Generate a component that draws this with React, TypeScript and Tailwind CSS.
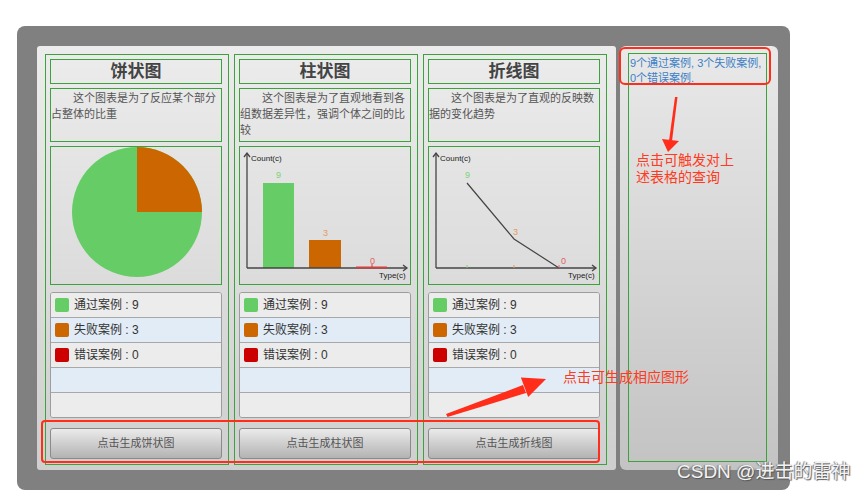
import React from 'react';

const FONT = '"Liberation Sans", "Noto Sans CJK SC", sans-serif';

const GREEN = '#66cc66';
const ORANGE = '#cc6600';
const RED = '#cc0000';

type Chart = {
  title: string;
  desc: string;
  button: string;
  kind: 'pie' | 'bar' | 'line';
};

const charts: Chart[] = [
  { title: '饼状图', desc: '这个图表是为了反应某个部分占整体的比重', button: '点击生成饼状图', kind: 'pie' },
  { title: '柱状图', desc: '这个图表是为了直观地看到各组数据差异性，强调个体之间的比较', button: '点击生成柱状图', kind: 'bar' },
  { title: '折线图', desc: '这个图表是为了直观的反映数据的变化趋势', button: '点击生成折线图', kind: 'line' },
];

const legend = [
  { label: '通过案例 : 9', color: GREEN },
  { label: '失败案例 : 3', color: ORANGE },
  { label: '错误案例 : 0', color: RED },
];

export default function App() {
  return (
    <div className="relative w-[864px] h-[493px] bg-white overflow-hidden" style={{ fontFamily: FONT }}>
      <div className="pl-[17px] pt-[26px]">
        {/* dark frame */}
        <div className="w-[773px] h-[464px] rounded-lg bg-[#808080] pl-5 pt-5 pr-3 flex gap-1">
          {/* charts panel */}
          <div className="w-[579px] h-[424px] rounded-[3px] bg-gradient-to-b from-[#ececec] to-[#cfcfcf] pl-2 pt-2 flex gap-[5px]">
            {charts.map((c) => (
              <ChartColumn key={c.title} chart={c} />
            ))}
          </div>

          {/* result panel */}
          <div className="w-[158px] h-[424px] rounded-md bg-gradient-to-b from-[#e9e9e9] to-[#c3c3c3] pl-2 pt-[7px]">
            <div className="w-[139px] h-[409px] border border-[#3ca33c] pl-px pt-[2px]">
              <p className="text-[11px] leading-[15px] text-[#3b7fc6]">
                9个通过案例, 3个失败案例, 0个错误案例.
              </p>
            </div>
          </div>
        </div>
      </div>

      {/* annotations */}
      <div className="absolute left-[41px] top-[420px] w-[559px] h-[43px] border-2 border-[#ff2d1a] rounded-[4px]" />
      <div className="absolute left-[619px] top-[47px] w-[152px] h-[38px] border-2 border-[#ff2d1a] rounded-md" />

      <svg className="absolute inset-0 pointer-events-none" width={864} height={493}>
        <polygon points="675,97 677.5,97 672,141 669,141" fill="#ff2d1a" />
        <polygon points="662,139 679,141 668,152" fill="#ff2d1a" />
        <polygon points="446,414 447.5,417 526,393 523,385" fill="#ff2d1a" />
        <polygon points="520.9,377.5 528.2,397 546,379" fill="#ff2d1a" />
      </svg>

      <div className="absolute left-[636px] top-[152px] text-[14px] leading-[17px] text-[#ff3a20]">
        <div>点击可触发对上</div>
        <div>述表格的查询</div>
      </div>
      <div className="absolute left-[563px] top-[369px] text-[14px] leading-[17px] text-[#ff3a20]">
        点击可生成相应图形
      </div>

      <div
        className="absolute left-[677px] top-[461px] text-[19px] leading-[22px] text-[#f2f2f2]"
        style={{ textShadow: '1px 1px 1px #555, -1px 0 1px #777' }}
      >
        CSDN @进击的雷神
      </div>
    </div>
  );
}

function ChartColumn({ chart }: { chart: Chart }) {
  return (
    <div className="w-[184px] h-[411px] border border-[#3ca33c] pl-1 pt-1 flex flex-col">
      <div className="w-[172px] h-[25px] border border-[#3ca33c] flex items-center justify-center text-[17px] font-bold text-[#444]">
        {chart.title}
      </div>
      <div className="w-[172px] h-[54px] mt-1 border border-[#3ca33c] text-[11px] leading-4 text-[#555] indent-[22px] pt-px">
        {chart.desc}
      </div>
      <div className="w-[172px] h-[139px] mt-1 border border-[#3ca33c]">
        {chart.kind === 'pie' && <PieChart />}
        {chart.kind === 'bar' && <BarChart />}
        {chart.kind === 'line' && <LineChart />}
      </div>

      {/* legend list */}
      <div className="w-[172px] h-[126px] mt-[7px] border border-[#9d9d9d] rounded-[3px] overflow-hidden flex flex-col">
        {[0, 1, 2, 3, 4].map((i) => {
          const item = legend[i];
          return (
            <div
              key={i}
              className={`h-[25px] shrink-0 flex items-center gap-[5px] pl-1 text-[12px] text-[#333] ${
                i % 2 === 1 ? 'bg-[#e1ecf6]' : 'bg-[#ececec]'
              } ${i < 4 ? 'border-b border-[#a8a8a8]' : ''}`}
            >
              {item && (
                <>
                  <span className="w-[14px] h-[14px] rounded-[2px]" style={{ background: item.color }} />
                  <span>{item.label}</span>
                </>
              )}
            </div>
          );
        })}
      </div>

      <button className="w-[172px] h-[31px] mt-[10px] rounded-[3px] border border-[#8a8a8a] bg-gradient-to-b from-[#ebebeb] to-[#b3b3b3] text-[11px] text-[#555]">
        {chart.button}
      </button>
    </div>
  );
}

function PieChart() {
  const cx = 86;
  const cy = 65;
  const r = 65;
  return (
    <svg width={170} height={137}>
      <circle cx={cx} cy={cy} r={r} fill={GREEN} />
      <path d={`M${cx},${cy} L${cx},${cy - r} A${r},${r} 0 0 1 ${cx + r},${cy} Z`} fill={ORANGE} />
    </svg>
  );
}

function Axes() {
  return (
    <g stroke="#444" strokeWidth={1.3} fill="none">
      <line x1={7} y1={6} x2={7} y2={121} />
      <line x1={7} y1={121} x2={167} y2={121} />
      <polyline points="4,10 7,6 10,10" />
      <polyline points="163,118 167,121 163,124" />
      <text x={11} y={14} fontSize={8} fill="#222" stroke="none">Count(c)</text>
      <text x={139} y={131} fontSize={8} fill="#222" stroke="none">Type(c)</text>
    </g>
  );
}

function BarChart() {
  return (
    <svg width={170} height={137}>
      <rect x={23} y={36} width={31} height={85} fill={GREEN} />
      <rect x={69} y={93} width={32} height={28} fill={ORANGE} />
      <Axes />
      <rect x={116} y={119.5} width={31} height={2} fill="#d04040" />
      <line x1={132} y1={117} x2={132} y2={121} stroke="#d04040" />
      <text x={36} y={31} fontSize={9} fill="#7ad37a">9</text>
      <text x={83} y={89} fontSize={9} fill="#e39a5c">3</text>
      <text x={130} y={117} fontSize={9} fill="#e26060">0</text>
    </svg>
  );
}

function LineChart() {
  return (
    <svg width={170} height={137}>
      <Axes />
      <polyline points="38,36 85,92 130,121" fill="none" stroke="#444" strokeWidth={1.2} />
      <line x1={38} y1={118} x2={38} y2={121} stroke="#7ad37a" />
      <line x1={85} y1={118} x2={85} y2={121} stroke="#e39a5c" />
      <line x1={130} y1={118} x2={130} y2={121} stroke="#e26060" />
      <text x={36} y={31} fontSize={9} fill="#7ad37a">9</text>
      <text x={84} y={88} fontSize={9} fill="#e39a5c">3</text>
      <text x={132} y={117} fontSize={9} fill="#e26060">0</text>
    </svg>
  );
}
